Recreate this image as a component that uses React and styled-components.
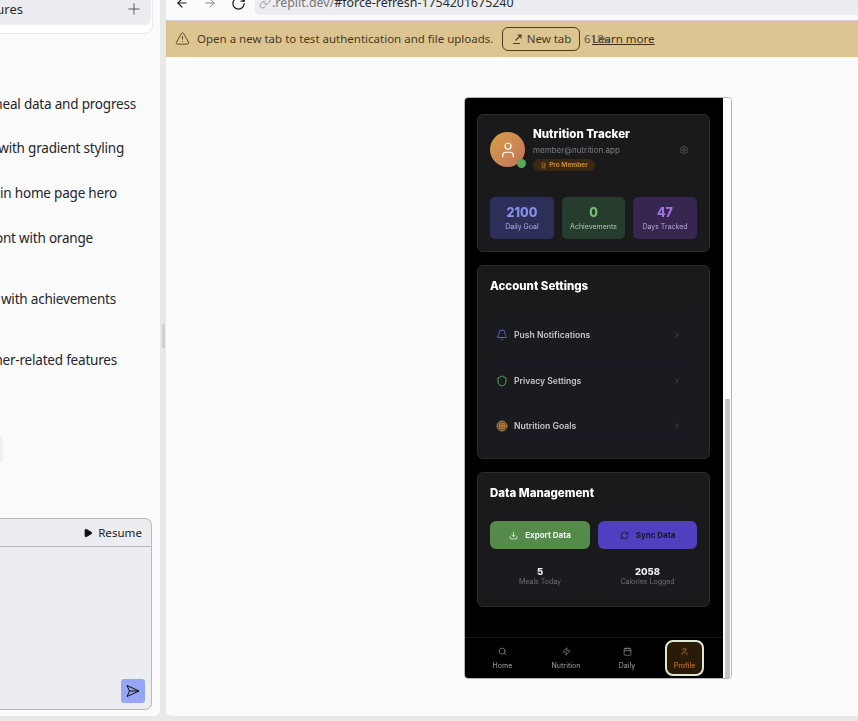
import React from 'react';
import styled, { createGlobalStyle } from 'styled-components';
import {
  ArrowLeft, ArrowRight, RotateCw, Link, Plus, TriangleAlert, Play,
  User, Settings, Award, Bell, Shield, Target, ChevronRight, Download, RefreshCw,
  Search, Zap, Calendar,
} from 'lucide-react';

const GlobalStyle = createGlobalStyle`
  html, body { margin: 0; height: 100%; overflow: hidden; background: #efefef; }
  * { box-sizing: border-box; }
  body { font-family: "Noto Sans", "Liberation Sans", sans-serif; }
`;

const Page = styled.div`
  width: 858px;
  height: 721px;
  display: flex;
  gap: 6px;
  padding-bottom: 5px;
  background: #e9e9e9;
  position: relative;
`;

const LeftPane = styled.div`
  width: 160px;
  display: flex;
  flex-direction: column;
  background: #fbfbfb;
  border-bottom-right-radius: 6px;
  overflow: hidden;
`;

const TaskCard = styled.div`
  width: 153px;
  height: 34px;
  flex-shrink: 0;
  background: #fff;
  border-bottom: 1px solid #e6e6e6;
  border-right: 1px solid #ececec;
  border-bottom-right-radius: 8px;
  padding-right: 1px;
`;

const TaskHead = styled.div`
  height: 25px;
  background: #ecedf0;
  border-bottom-right-radius: 6px;
  display: flex;
  align-items: flex-start;
  justify-content: space-between;
  padding: 0 8px 0 0;
  font-size: 13px;
  color: #2b2b2f;
`;

const TaskName = styled.div`
  width: 23px;
  height: 18px;
  display: flex;
  justify-content: flex-end;
  white-space: nowrap;
  overflow: hidden;
`;

const Steps = styled.div`
  display: flex;
  flex-direction: column;
  padding-top: 60px;
`;

const Step = styled.div`
  height: 20px;
  margin-top: ${({ $top }) => $top}px;
  padding-right: ${({ $right }) => $right}px;
  display: flex;
  justify-content: flex-end;
  align-items: center;
  white-space: nowrap;
  font-size: 13.5px;
  color: #25252a;
  letter-spacing: -0.2px;
`;

const Bubble = styled.div`
  width: 3px;
  height: 27px;
  margin-top: 66px;
  background: #f1f1f3;
  border-radius: 0 4px 4px 0;
`;

const Composer = styled.div`
  width: 152px;
  height: 192px;
  margin-top: 55px;
  background: #ecedf0;
  border: 1px solid #b9b9bb;
  border-left: 0;
  border-radius: 0 7px 7px 0;
  display: flex;
  flex-direction: column;
`;

const ComposerHead = styled.div`
  height: 28px;
  border-bottom: 1px solid #b9b9bb;
  display: flex;
  align-items: center;
  justify-content: flex-end;
  gap: 5px;
  padding-right: 9px;
  font-size: 11.6px;
  color: #1f1f22;
`;

const ComposerBody = styled.div`
  flex: 1;
  display: flex;
  align-items: flex-end;
  justify-content: flex-end;
  padding: 0 6px 6px 0;
`;

const SendButton = styled.div`
  width: 24px;
  height: 24px;
  border-radius: 3px;
  background: #96a6f5;
  display: flex;
  align-items: center;
  justify-content: center;
`;

const Divider = styled.div`
  position: absolute;
  left: 162px;
  top: 324px;
  width: 3px;
  height: 24px;
  background: #cfcfcf;
  border-radius: 2px;
`;

const RightPane = styled.div`
  flex: 1;
  display: flex;
  flex-direction: column;
  background: #fbfbfb;
  border-radius: 0 0 0 6px;
  overflow: hidden;
`;

const Toolbar = styled.div`
  height: 21px;
  flex-shrink: 0;
  display: flex;
  align-items: flex-start;
  gap: 14px;
  padding-left: 9px;
  border-bottom: 1px solid #cfcfcf;
  color: #1f1f22;
  overflow: hidden;
`;

const NavIcon = styled.div`
  margin-top: -4px;
  color: ${({ $muted }) => ($muted ? '#77777b' : '#1f1f22')};
  display: flex;
`;

const UrlField = styled.div`
  flex: 1;
  height: 25px;
  margin: -10px 0 0 -5px;
  padding: 0 0 0 4px;
  background: #ecedf0;
  border-radius: 5px 0 0 5px;
  display: flex;
  align-items: center;
  gap: 1px;
  font-size: 12.4px;
  color: #77777b;
`;

const UrlPath = styled.span`
  color: #2b2b2f;
`;

const Banner = styled.div`
  height: 36px;
  flex-shrink: 0;
  background: #ddc592;
  display: flex;
  align-items: center;
  padding: 0 0 1px 9px;
  font-size: 11.5px;
  color: #4a3a1e;
  position: relative;
`;

const BannerText = styled.span`
  margin-left: 7px;
  width: 305px;
  white-space: nowrap;
`;

const NewTabButton = styled.div`
  width: 78px;
  height: 24px;
  border: 1px solid #4d3a1a;
  border-radius: 6px;
  display: flex;
  align-items: center;
  justify-content: center;
  gap: 4px;
`;

const LearnMore = styled.a`
  margin-left: 12px;
  text-decoration: underline;
  color: #3f3016;
`;

const Timer = styled.span`
  position: absolute;
  left: 418px;
  top: 10px;
  color: #5a5a55;
`;

const PreviewArea = styled.div`
  flex: 1;
  display: flex;
  justify-content: flex-end;
  padding: 40px 126px 0 0;
`;

const Phone = styled.div`
  width: 268px;
  height: 582px;
  display: flex;
  border: 1px solid #b5b5b5;
  border-radius: 4px;
  overflow: hidden;
  font-family: Inter, "Noto Sans", sans-serif;
`;

const Screen = styled.div`
  width: 258px;
  display: flex;
  flex-direction: column;
  background: #000;
  filter: blur(0.25px);
`;

const Track = styled.div`
  width: 8px;
  padding: 301px 1px 0 2px;
  background: #fff;
  display: flex;
`;

const Thumb = styled.div`
  flex: 1;
  background: #c4c4c4;
`;

const Content = styled.div`
  flex: 1;
  display: flex;
  flex-direction: column;
  gap: 13px;
  padding: 16px 13px 0 12px;
`;

const Card = styled.section`
  height: ${({ $h }) => $h}px;
  background: #1a1a1c;
  border: 1px solid #2b2b2d;
  border-radius: 6px;
  padding: ${({ $pad }) => $pad}px 12px 0;
`;

const ProfileRow = styled.div`
  display: flex;
  align-items: flex-start;
  gap: 8px;
`;

const Avatar = styled.div`
  width: 35px;
  height: 35px;
  border-radius: 50%;
  margin-top: 5px;
  background: linear-gradient(135deg, #d79f45, #c2745f);
  color: #fff;
  display: flex;
  align-items: center;
  justify-content: center;
  position: relative;
  flex-shrink: 0;
`;

const OnlineDot = styled.span`
  position: absolute;
  right: -1px;
  bottom: -1px;
  width: 9px;
  height: 9px;
  border-radius: 50%;
  background: #5aa85a;
`;

const ProfileInfo = styled.div`
  flex: 1;
  display: flex;
  flex-direction: column;
  align-items: flex-start;
`;

const Name = styled.div`
  font-size: 11.5px;
  line-height: 14px;
  font-weight: 800;
  color: #fff;
`;

const Email = styled.div`
  margin-top: 3px;
  font-size: 8px;
  line-height: 12px;
  color: #7f7f84;
`;

const ProBadge = styled.div`
  margin-top: 3px;
  width: 62px;
  height: 12px;
  border-radius: 6px;
  background: #3a2813;
  color: #c98b35;
  font-size: 6.5px;
  font-weight: 700;
  display: flex;
  align-items: center;
  justify-content: center;
  gap: 2px;
`;

const GearIcon = styled.div`
  margin: 18px 8px 0 0;
  color: #59595d;
  display: flex;
`;

const StatGrid = styled.div`
  display: grid;
  grid-template-columns: 64px 63px 64px;
  gap: 8px;
  margin-top: 26px;
`;

const StatBox = styled.div`
  height: 42px;
  border-radius: 5px;
  background: ${({ $bg }) => $bg};
  display: flex;
  flex-direction: column;
  align-items: center;
  justify-content: center;
`;

const StatValue = styled.div`
  font-size: 12.5px;
  line-height: 16px;
  font-weight: 800;
  color: ${({ $color }) => $color};
`;

const StatLabel = styled.div`
  font-size: 7px;
  line-height: 11px;
  color: ${({ $color }) => $color};
`;

const CardTitle = styled.h2`
  margin: 0;
  font-size: 11.5px;
  line-height: 14px;
  font-weight: 800;
  color: #fff;
`;

const SettingsList = styled.div`
  margin-top: 22px;
  display: flex;
  flex-direction: column;
  gap: 7px;
`;

const SettingRow = styled.div`
  height: ${({ $last }) => ($last ? 38 : 39)}px;
  border-radius: 5px;
  background: #1a1b20;
  display: flex;
  align-items: center;
  padding: 0 16px 0 6px;
  gap: 6px;
  color: #c6c6ca;
  font-size: 8.6px;
  font-weight: 600;
`;

const SettingIcon = styled.div`
  width: 12px;
  display: flex;
  justify-content: center;
  color: ${({ $color }) => $color};
`;

const SettingLabel = styled.span`
  flex: 1;
`;

const Chevron = styled.div`
  display: flex;
  color: #5c5c60;
`;

const TwoCols = styled.div`
  display: grid;
  grid-template-columns: 100px 99px;
  gap: 8px;
  margin-top: ${({ $top }) => $top}px;
`;

const ActionButton = styled.div`
  height: 28px;
  border-radius: 6px;
  background: ${({ $bg }) => $bg};
  color: ${({ $color }) => $color};
  display: flex;
  align-items: center;
  justify-content: center;
  gap: 7px;
  font-size: 8px;
  font-weight: 700;
`;

const MiniStat = styled.div`
  height: 35px;
  padding-top: 3px;
  border-radius: 5px;
  background: #1a1a20;
  display: flex;
  flex-direction: column;
  align-items: center;
  justify-content: center;
`;

const MiniValue = styled.div`
  font-size: 9.5px;
  line-height: 11px;
  font-weight: 800;
  color: #f2f2f2;
`;

const MiniLabel = styled.div`
  font-size: 7px;
  line-height: 10px;
  color: #6f6f74;
`;

const BottomNav = styled.nav`
  height: 41px;
  flex-shrink: 0;
  border-top: 1px solid #18181a;
  display: grid;
  grid-template-columns: 67px 60px 62px 61px;
  padding: 2px 4px;
`;

const NavItem = styled.div`
  display: flex;
  flex-direction: column;
  align-items: center;
  justify-content: center;
  gap: 5px;
  font-size: 7px;
  font-weight: 500;
  color: ${({ $active }) => ($active ? '#b8701f' : '#8a8a8e')};
  ${({ $active }) => $active && `
    width: 39px;
    margin-left: 7px;
    background: #2a1a08;
    border: 2px solid #dfe8d0;
    border-radius: 8px;
  `}
`;

const steps = [
  { text: 'Updated meal data and progress', right: 24, top: 0 },
  { text: 'Styled it with gradient styling', right: 36, top: 24 },
  { text: 'Added logo in home page hero', right: 43, top: 25 },
  { text: 'Changed font with orange', right: 67, top: 25 },
  { text: 'Redesigned with achievements', right: 44, top: 41 },
  { text: 'Removed other-related features', right: 43, top: 41 },
];

const accountRows = [
  { icon: Bell, label: 'Push Notifications', color: '#5a68c0' },
  { icon: Shield, label: 'Privacy Settings', color: '#5aa85a' },
  { icon: Target, label: 'Nutrition Goals', color: '#b47f35', fill: 'rgba(180,127,53,0.45)', last: true },
];

const navItems = [
  { icon: Search, label: 'Home' },
  { icon: Zap, label: 'Nutrition' },
  { icon: Calendar, label: 'Daily' },
  { icon: User, label: 'Profile', active: true },
];

const SendIcon = () => (
  <svg width="14" height="14" viewBox="0 0 14 14" fill="none" stroke="#111" strokeWidth="1">
    <path d="M1 1.5 13 7 1 12.5 3.5 7zM3.5 7H13" />
  </svg>
);

const NewTabIcon = () => (
  <svg width="12" height="12" viewBox="0 0 12 12" fill="none" stroke="#4a3a1e" strokeWidth="1.1">
    <path d="M4.5 7.5 10 2M6.5 2H10V5.5M2 10.5H9" />
  </svg>
);

export default function App() {
  return (
    <>
      <GlobalStyle />
      <Page>
        <LeftPane>
          <TaskCard>
            <TaskHead>
              <TaskName>Added features</TaskName>
              <Plus size={18} strokeWidth={1} />
            </TaskHead>
          </TaskCard>
          <Steps>
            {steps.map((step) => (
              <Step key={step.text} $top={step.top} $right={step.right}>{step.text}</Step>
            ))}
          </Steps>
          <Bubble />
          <Composer>
            <ComposerHead>
              <Play size={10} fill="#111" color="#111" />
              <span>Resume</span>
            </ComposerHead>
            <ComposerBody>
              <SendButton><SendIcon /></SendButton>
            </ComposerBody>
          </Composer>
        </LeftPane>

        <RightPane>
          <Toolbar>
            <NavIcon><ArrowLeft size={14} /></NavIcon>
            <NavIcon $muted><ArrowRight size={14} strokeWidth={1.5} /></NavIcon>
            <NavIcon><RotateCw size={15} /></NavIcon>
            <UrlField>
              <Link size={12} strokeWidth={1.4} />
              <span>.replit.dev/<UrlPath>#force-refresh-1754201675240</UrlPath></span>
            </UrlField>
          </Toolbar>
          <Banner>
            <TriangleAlert size={15} strokeWidth={1.4} />
            <BannerText>Open a new tab to test authentication and file uploads.</BannerText>
            <NewTabButton>
              <NewTabIcon />
              New tab
            </NewTabButton>
            <LearnMore>Learn more</LearnMore>
            <Timer>618s</Timer>
          </Banner>
          <PreviewArea>
            <Phone>
              <Screen>
                <Content>
                  <Card $h={138} $pad={12}>
                    <ProfileRow>
                      <Avatar>
                        <User size={18} strokeWidth={1.6} />
                        <OnlineDot />
                      </Avatar>
                      <ProfileInfo>
                        <Name>Nutrition Tracker</Name>
                        <Email>member@nutrition.app</Email>
                        <ProBadge><Award size={7} /> Pro Member</ProBadge>
                      </ProfileInfo>
                      <GearIcon><Settings size={10} /></GearIcon>
                    </ProfileRow>
                    <StatGrid>
                      <StatBox $bg="#2c3058">
                        <StatValue $color="#8890ea">2100</StatValue>
                        <StatLabel $color="#aab0e8">Daily Goal</StatLabel>
                      </StatBox>
                      <StatBox $bg="#263c2c">
                        <StatValue $color="#72c070">0</StatValue>
                        <StatLabel $color="#a8d0a8">Achievements</StatLabel>
                      </StatBox>
                      <StatBox $bg="#37264f">
                        <StatValue $color="#a273e0">47</StatValue>
                        <StatLabel $color="#b8a4d8">Days Tracked</StatLabel>
                      </StatBox>
                    </StatGrid>
                  </Card>

                  <Card $h={194} $pad={13}>
                    <CardTitle>Account Settings</CardTitle>
                    <SettingsList>
                      {accountRows.map(({ icon: Icon, label, color, fill, last }) => (
                        <SettingRow key={label} $last={last}>
                          <SettingIcon $color={color}><Icon size={12} fill={fill || 'none'} /></SettingIcon>
                          <SettingLabel>{label}</SettingLabel>
                          <Chevron><ChevronRight size={8} /></Chevron>
                        </SettingRow>
                      ))}
                    </SettingsList>
                  </Card>

                  <Card $h={135} $pad={13}>
                    <CardTitle>Data Management</CardTitle>
                    <TwoCols $top={21}>
                      <ActionButton $bg="#548a4a" $color="#f2f7f0">
                        <Download size={9} />
                        Export Data
                      </ActionButton>
                      <ActionButton $bg="#5040c0" $color="#17171f">
                        <RefreshCw size={9} />
                        Sync Data
                      </ActionButton>
                    </TwoCols>
                    <TwoCols $top={8}>
                      <MiniStat>
                        <MiniValue>5</MiniValue>
                        <MiniLabel>Meals Today</MiniLabel>
                      </MiniStat>
                      <MiniStat>
                        <MiniValue>2058</MiniValue>
                        <MiniLabel>Calories Logged</MiniLabel>
                      </MiniStat>
                    </TwoCols>
                  </Card>
                </Content>
                <BottomNav>
                  {navItems.map(({ icon: Icon, label, active }) => (
                    <NavItem key={label} $active={active}>
                      <Icon size={9} />
                      {label}
                    </NavItem>
                  ))}
                </BottomNav>
              </Screen>
              <Track><Thumb /></Track>
            </Phone>
          </PreviewArea>
        </RightPane>
        <Divider />
      </Page>
    </>
  );
}
